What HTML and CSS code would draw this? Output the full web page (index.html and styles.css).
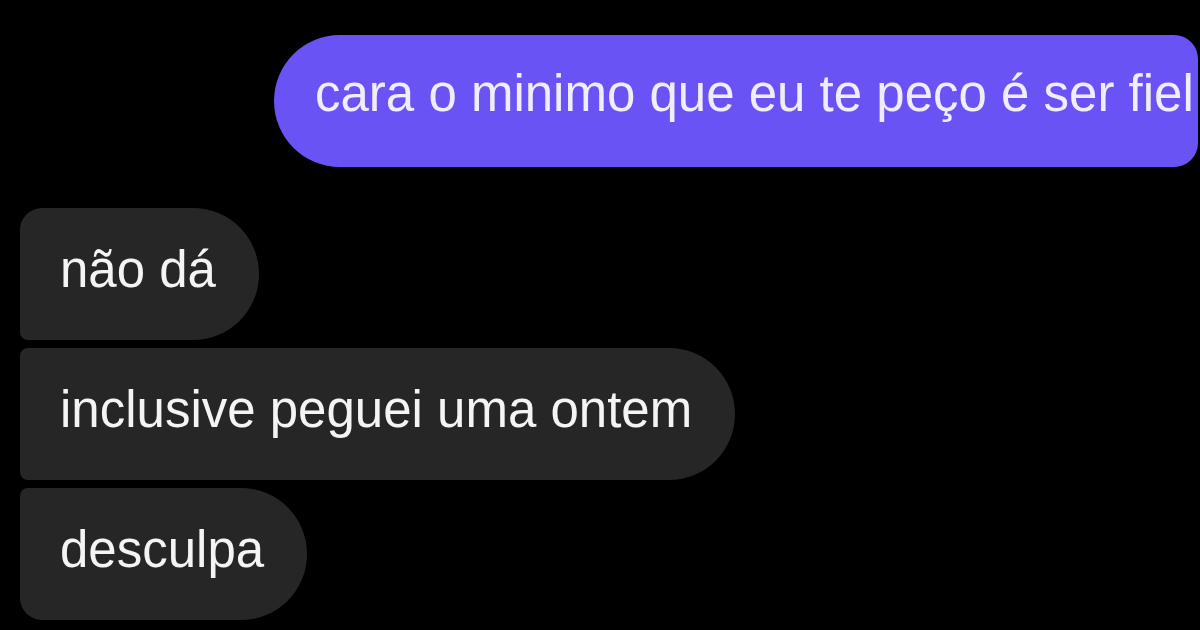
FILE: index.html
```html
<!DOCTYPE html>
<html lang="pt">
<head>
<meta charset="utf-8">
<title>Chat</title>
<link rel="stylesheet" href="styles.css">
</head>
<body>
<main class="chat">
  <div class="msg msg-out">cara o minimo que eu te peço é ser fiel</div>
  <div class="group-in">
    <div class="msg msg-in first">não dá</div>
    <div class="msg msg-in middle">inclusive peguei uma ontem</div>
    <div class="msg msg-in last">desculpa</div>
  </div>
</main>
</body>
</html>
```

FILE: styles.css
```css
html, body {
  margin: 0;
  padding: 0;
  background: #000;
  width: 1200px;
  height: 630px;
  overflow: hidden;
}

.chat {
  display: flex;
  flex-direction: column;
  align-items: flex-start;
  padding-top: 35px;
  font-family: "Liberation Sans", Arial, sans-serif;
  font-size: 51px;
  line-height: 50px;
}

.msg {
  box-sizing: border-box;
  height: 132px;
  white-space: nowrap;
  overflow: hidden;
}

.msg-out {
  margin-left: 274px;
  width: 924px;
  padding: 34px 0 0 41px;
  background: #6a53f4;
  color: #f1edff;
  border-radius: 66px 24px 24px 66px;
}

.group-in {
  margin-top: 41px;
  margin-left: 20px;
  display: flex;
  flex-direction: column;
  align-items: flex-start;
  gap: 8px;
}

.msg-in {
  padding: 37px 43px 0 40px;
  background: #262626;
  color: #f4f4f4;
  border-radius: 8px 66px 66px 8px;
}

.msg-in.first {
  border-top-left-radius: 22px;
}

.msg-in.last {
  border-bottom-left-radius: 22px;
}
```
